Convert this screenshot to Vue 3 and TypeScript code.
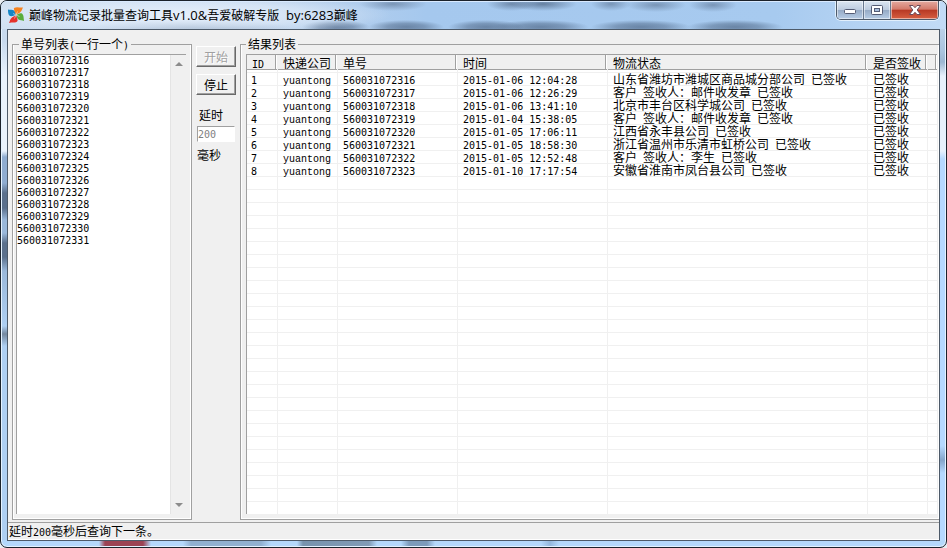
<script setup lang="ts">
import { computed, ref } from 'vue'

interface Run { text: string; latin: boolean }
interface Row { id: number; company: string; no: string; time: string; status: string; signed: string }

const FIRST_NO = 560031072316
const ROW_COUNT = 34

const numbers = ref(Array.from({ length: 16 }, (_, i) => String(FIRST_NO + i)).join('\n'))
const delay = ref('200')
const running = ref(true)

const title = '巅峰物流记录批量查询工具v1.0&吾爱破解专版  by:6283巅峰'

const records: [string, string][] = [
  ['2015-01-06 12:04:28', '山东省潍坊市潍城区商品城分部公司 已签收'],
  ['2015-01-06 12:26:29', '客户 签收人\uff1a邮件收发章 已签收'],
  ['2015-01-06 13:41:10', '北京市丰台区科学城公司 已签收'],
  ['2015-01-04 15:38:05', '客户 签收人\uff1a邮件收发章 已签收'],
  ['2015-01-05 17:06:11', '江西省永丰县公司 已签收'],
  ['2015-01-05 18:58:30', '浙江省温州市乐清市虹桥公司 已签收'],
  ['2015-01-05 12:52:48', '客户 签收人\uff1a李生 已签收'],
  ['2015-01-10 17:17:54', '安徽省淮南市凤台县公司 已签收'],
]

const rows = computed<Row[]>(() => records.map(([time, status], i) => ({
  id: i + 1, company: 'yuantong', no: String(FIRST_NO + i), time, status, signed: '已签收',
})))
const blankRows = computed(() => ROW_COUNT - rows.value.length)
const message = computed(() => `延时${delay.value}毫秒后查询下一条。`)

// Half-width characters get their own size so that two of them fill one full-width cell.
function runs(text: string): Run[] {
  return (text.match(/[\x20-\x7e]+|[^\x20-\x7e]+/g) ?? []).map(t => ({ text: t, latin: t.charCodeAt(0) < 127 }))
}
</script>

<template>
  <div class="window">
    <header class="titlebar">
      <svg class="logo" viewBox="0 0 16 16" width="16" height="16" aria-hidden="true">
        <path d="M0 2.500 C2 3 5 2 6.500 4 C7.500 5.500 7.500 7 8 8 C6 8.500 4 9.500 2 9 C0 8 0 5 0 2.500Z" fill="#1685c4" />
        <path d="M6 1 C9 -0.500 12 1 15 0.500 C14 2 14 4 12 5.500 C10.500 6.500 9 7 8 8 C7.500 6 5.500 3 6 1Z" fill="#f58220" />
        <path d="M8 8 C10 7 12 5.500 14 6.500 C16 8 15.500 11 16 14 C14 13 12 13.500 10.500 12.500 C9 11 9 9.500 8 8Z" fill="#58ad3c" />
        <path d="M8 8 C8.500 10 10 12 9.500 14 C8 16.500 4 15 1 16 C2 14 2 12 4 10.500 C5.500 9.500 7 9 8 8Z" fill="#e5322b" />
        <path d="M8 8 L5 6.500 M8 8 L9.500 4.500 M8 8 L11.500 9.500 M8 8 L6.500 11.500" stroke="#fff" stroke-width=".7" opacity=".7" />
      </svg>
      <h1><span v-for="(r, i) in runs(title)" :key="i" :class="{ wide: r.latin }">{{ r.text }}</span></h1>
      <div class="controls">
        <button type="button" aria-label="最小化">
          <svg viewBox="0 0 14 12" width="14" height="12"><rect x="1.500" y="5.500" width="11" height="4" rx="1" fill="#fff" stroke="#555c74" /></svg>
        </button>
        <button type="button" aria-label="最大化">
          <svg viewBox="0 0 14 12" width="14" height="12"><rect x="1.500" y="1.500" width="11" height="9" rx="1" fill="#fff" stroke="#555c74" /><rect x="4.500" y="4.500" width="5" height="3" fill="#a9bfdc" stroke="#555c74" /></svg>
        </button>
        <button type="button" class="close" aria-label="关闭">
          <svg viewBox="0 0 14 12" width="14" height="12"><path d="M1.500 1.500H5L7 3.700 9 1.500H12.500L9.200 6 12.500 10.500H9L7 8.300 5 10.500H1.500L4.800 6Z" fill="#fff" stroke="#6b4a58" /></svg>
        </button>
      </div>
    </header>

    <div class="client">
      <main class="content">
        <fieldset class="group list-group">
          <legend><label for="numbers"><span v-for="(r, i) in runs('单号列表(一行一个)')" :key="i" :class="{ latin: r.latin }">{{ r.text }}</span></label></legend>
          <div class="list-box">
            <textarea id="numbers" v-model="numbers" spellcheck="false" wrap="off"></textarea>
            <div class="scrollbar" aria-hidden="true">
              <svg viewBox="0 0 8 4" width="8" height="4"><path d="M0 4L4 0L8 4Z" fill="#8c8c8c" /></svg>
              <svg viewBox="0 0 8 4" width="8" height="4"><path d="M0 0L4 4L8 0Z" fill="#8c8c8c" /></svg>
            </div>
          </div>
        </fieldset>

        <div class="actions">
          <button type="button" :disabled="running" @click="running = true">开始</button>
          <button type="button" :disabled="!running" @click="running = false">停止</button>
          <label for="delay">延时</label>
          <input id="delay" v-model="delay" type="text" :disabled="running" aria-describedby="unit">
          <span id="unit">毫秒</span>
        </div>

        <fieldset class="group result-group">
          <legend>结果列表</legend>
          <div class="table-box">
            <table>
              <colgroup><col class="c-id"><col class="c-company"><col class="c-no"><col class="c-time"><col class="c-status"><col class="c-signed"><col></colgroup>
              <thead>
                <tr><th><span class="latin">ID</span></th><th>快递公司</th><th>单号</th><th>时间</th><th>物流状态</th><th>是否签收</th><th></th></tr>
              </thead>
              <tbody>
                <tr v-for="row in rows" :key="row.id">
                  <td><span class="latin">{{ row.id }}</span></td>
                  <td><span class="latin company">{{ row.company }}</span></td>
                  <td><span class="latin">{{ row.no }}</span></td>
                  <td><span class="latin">{{ row.time }}</span></td>
                  <td><span v-for="(r, i) in runs(row.status)" :key="i" :class="{ latin: r.latin }">{{ r.text }}</span></td>
                  <td>{{ row.signed }}</td>
                  <td></td>
                </tr>
                <tr v-for="n in blankRows" :key="'blank' + n"><td v-for="c in 7" :key="c"></td></tr>
              </tbody>
            </table>
          </div>
        </fieldset>
      </main>
      <footer class="status"><span v-for="(r, i) in runs(message)" :key="i" :class="{ latin: r.latin }">{{ r.text }}</span></footer>
    </div>
  </div>
</template>

<style>
body { background: #e9edf2; }
</style>

<style scoped>
* { box-sizing: border-box; }
.window {
  height: 100vh;
  min-height: 300px;
  display: flex;
  flex-direction: column;
  padding: 0 6px 6px;
  border: 1px solid #1b222b;
  border-radius: 7px;
  overflow: hidden;
  color: #000;
  font: 12px/12px "Noto Sans CJK SC", sans-serif;
  box-shadow: inset 0 0 0 1px #e4f2ff;
  background:
    linear-gradient(90deg, transparent 98px, #9c4354 104px, #9c4354 142px, transparent 150px, transparent 182px, #91b0d0 190px, #91b0d0 260px, transparent 270px, transparent 296px, #7893ae 302px, #819bb6 368px, transparent 376px, transparent 400px, #7d9bbb 408px, #7d9bbb 426px, transparent 434px, transparent 540px, #94b7dc 549px, transparent 558px) 0 100% / 100% 7px no-repeat,
    linear-gradient(#c8daee, #c8daee 40px, #e9f2fc 75px, #e9f2fc 150px, #8facd0 156px, #8facd0 182px, #5b708c 192px, #5b708c 207px, #9ab8da 219px, #9ab8da 232px, #5b708c 242px, #5b708c 256px, #9ab8da 270px, #aecff2 325px, #74889f 333px, #aecff2 345px) 0 0 / 7px calc(100% - 7px) no-repeat,
    linear-gradient(#cfe2f6, #aac5df 50px, #9cb7d2 61px, #e7f1fc 75px, #e7f1fc 150px, #b5d9ff 158px, #b5d9ff 445px, #84a5ca 459px, #b5d9ff 472px) 100% 0 / 7px calc(100% - 7px) no-repeat,
    #b4d8fb;
}
.titlebar {
  flex: 0 0 28px;
  display: flex;
  align-items: flex-start;
  margin: 0 -6px;
  padding-left: 7px;
  border-top: 1px solid #d9eaff;
  background:
    radial-gradient(ellipse 210px 20px at 180px 13px, rgba(234, 242, 252, .9), rgba(224, 236, 250, .65) 60%, transparent),
    radial-gradient(ellipse 34px 7px at 392px 2px, rgba(90, 114, 145, .6), transparent),
    radial-gradient(ellipse 24px 7px at 510px 2px, rgba(90, 114, 145, .7), transparent),
    radial-gradient(ellipse 34px 7px at 542px 2px, rgba(80, 104, 135, .75), transparent),
    radial-gradient(ellipse 20px 7px at 610px 2px, rgba(90, 114, 145, .6), transparent),
    radial-gradient(ellipse 30px 7px at 655px 3px, rgba(90, 114, 145, .6), transparent),
    radial-gradient(ellipse 24px 7px at 712px 3px, rgba(90, 114, 145, .6), transparent),
    radial-gradient(ellipse 100px 7px at 190px 25px, rgba(90, 114, 145, .6), transparent),
    radial-gradient(ellipse 34px 7px at 335px 25px, rgba(80, 104, 135, .7), rgba(80, 104, 135, .5) 50%, transparent),
    radial-gradient(ellipse 38px 7px at 405px 25px, rgba(80, 104, 135, .7), rgba(80, 104, 135, .5) 50%, transparent),
    radial-gradient(ellipse 38px 7px at 485px 25px, rgba(80, 104, 135, .7), rgba(80, 104, 135, .5) 50%, transparent),
    radial-gradient(ellipse 48px 7px at 540px 25px, rgba(80, 104, 135, .7), rgba(80, 104, 135, .5) 50%, transparent),
    radial-gradient(ellipse 50px 7px at 640px 25px, rgba(80, 104, 135, .7), rgba(80, 104, 135, .5) 50%, transparent),
    radial-gradient(ellipse 48px 7px at 734px 25px, rgba(80, 104, 135, .7), rgba(80, 104, 135, .5) 50%, transparent),
    linear-gradient(90deg, #d2e1f2, #bcd2ec 30%, #a5c8ee 45%, #a7caef 82%, #c2dbf6);
}
.logo { margin-top: 5px; }
h1 {
  flex: 1;
  margin: 6px 0 0 5px;
  font: 12px/14px "Noto Sans CJK SC", sans-serif;
  white-space: pre;
}
.wide { font-family: "Open Sans", sans-serif; font-size: 13px; line-height: 1px; }
.controls {
  display: flex;
  height: 19px;
  margin: -1px 7px 0 0;
  border: 1px solid #4d5a6a;
  border-top: 0;
  border-radius: 0 0 5px 5px;
  overflow: hidden;
  box-shadow: 0 0 0 1px #e1effc;
}
.controls button {
  width: 27px;
  padding: 0;
  border: 0;
  border-right: 1px solid #68788e;
  background: linear-gradient(#dce6f1, #bdccdf 48%, #96abc6 52%, #b7cde6);
  box-shadow: inset 0 0 0 1px rgba(255, 255, 255, .5);
  display: grid;
  place-items: center;
}
.controls .close {
  width: 47px;
  border-right: 0;
  background: linear-gradient(#e4aaa0, #d37b6c 45%, #b83a25 52%, #d65f42);
}
.client {
  flex: 1;
  min-height: 0;
  display: flex;
  flex-direction: column;
  border: 1px solid #4d5a69;
  background: #f0f0f0;
}
.content {
  flex: 1;
  min-height: 0;
  display: flex;
  padding: 7px 0 2px 4px;
}
.group {
  min-width: 0;
  margin: 0;
  padding: 3px 5px 5px 3px;
  border: 1px solid #a0a0a0;
  box-shadow: inset 0 -1px #fff, inset 1px 0 #fff, inset -1px 0 #fff;
  display: flex;
}
legend { margin-left: 3px; padding: 0 2px; line-height: 14px; white-space: nowrap; }
.list-group { flex: 0 0 180px; }
.list-box {
  flex: 1;
  min-width: 0;
  display: flex;
  border: 1px solid #a0a0a0;
  border-width: 1px 0 0 1px;
  background: #fff;
}
.latin { font-family: "DejaVu Sans Mono", monospace; font-size: 10px; line-height: 1px; white-space: pre; }
.company { font-family: "Liberation Mono", monospace; }
textarea {
  flex: 1;
  min-width: 0;
  padding: 0;
  border: 0;
  outline: 0;
  resize: none;
  overflow: hidden;
  background: #fff;
  color: #000;
  font: 10px/12px "DejaVu Sans Mono", monospace;
}
.scrollbar {
  width: 16px;
  display: flex;
  flex-direction: column;
  align-items: center;
  justify-content: space-between;
  padding: 7px 0;
  border-left: 1px solid #e4e4e4;
  background: #f0f0f0;
}
.actions {
  flex: 0 0 48px;
  display: flex;
  flex-direction: column;
  align-items: flex-start;
  padding: 9px 4px 0;
}
.actions button {
  width: 40px;
  height: 21px;
  margin-bottom: 7px;
  padding: 0;
  border: 1px solid;
  border-color: #fff #696969 #696969 #fff;
  box-shadow: inset -1px -1px #a0a0a0;
  background: #f0f0f0;
  color: #000;
  font: inherit;
}
.actions button:disabled { color: #a0a0a0; text-shadow: 1px 1px #fff; }
.actions label { margin: 7px 0 5px 3px; }
.actions input {
  width: 38px;
  height: 16px;
  margin: 0 0 7px 1px;
  padding: 0;
  border: 1px solid #a0a0a0;
  border-right-color: #fff;
  border-bottom-color: #fff;
  background: #fff;
  color: #808080;
  font: 10px/14px "DejaVu Sans Mono", monospace;
}
.actions span { margin-left: 1px; }
.result-group { flex: 1; padding: 3px 2px 5px 5px; border-right: 0; }
.result-group legend { margin-left: 0; }
.table-box {
  flex: 1;
  min-width: 0;
  min-height: 0;
  height: 100%;
  overflow: hidden;
  border: 1px solid #a0a0a0;
  border-width: 1px 0 0 1px;
  background: #fff;
}
.list-box, .table-box { contain: size; }
table { width: 100%; table-layout: fixed; border-collapse: separate; border-spacing: 0; }
.c-id { width: 31px; }
.c-company, .c-signed { width: 60px; }
.c-no { width: 120px; }
.c-time { width: 150px; }
.c-status { width: 260px; }
th, td {
  height: 13px;
  padding: 0 0 0 5px;
  border: solid #f0f0f0;
  border-width: 0 1px 1px 0;
  text-align: left;
  font-weight: 400;
  line-height: 12px;
  white-space: nowrap;
}
th {
  height: 18px;
  padding-bottom: 2px;
  background: #f0f0f0;
  box-shadow: inset 0 -2px #fff, inset 0 -3px #a0a0a0, inset -1px 0 #fff, inset -2px 0 #a0a0a0;
}
td:first-child { padding-left: 4px; }
td:last-child, th:last-child { border-right: 0; }
.status {
  flex: 0 0 18px;
  padding: 1px;
  border-top: 1px solid #a0a0a0;
  border-bottom: 1px solid #fff;
  line-height: 14px;
}
</style>
